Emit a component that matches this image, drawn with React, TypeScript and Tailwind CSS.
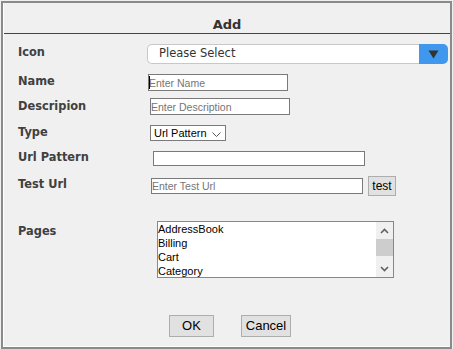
import React from 'react';

const label = 'w-[129px] shrink-0 text-[11.4px] font-bold text-[#404040] [font-family:"DejaVu_Sans",Verdana,sans-serif]';
const field =
  'block border border-[#7a7a7a] bg-white px-0 text-[10.5px] text-black outline-none placeholder:text-[#757575] [font-family:"Liberation_Sans",Arial,sans-serif]';
const btn =
  'flex items-center justify-center border border-[#adadad] bg-[#e1e1e1] text-black [font-family:"Liberation_Sans",Arial,sans-serif]';

const pages = ['AddressBook', 'Billing', 'Cart', 'Category'];

const Chevron: React.FC<{ up?: boolean }> = ({ up }) => (
  <svg width="9" height="6" viewBox="0 0 9 6">
    <polyline
      points={up ? '1,5 4.5,1.5 8,5' : '1,1 4.5,4.5 8,1'}
      fill="none"
      stroke="#606060"
      strokeWidth="1.6"
    />
  </svg>
);

const App: React.FC = () => {
  return (
    <div className="h-[349px] w-[453px] bg-[#f0f0f0] p-px">
      <div className="h-[348px] w-[451px] border-2 border-[#8a8a8a] bg-[#f0f0f0]">
        <div className="flex h-full flex-col border-b border-l border-white">
          {/* Header */}
          <div className="flex h-[31px] items-end justify-center border-b border-[#444]">
            <span className='text-[13px] font-bold leading-[16px] text-[#333] [font-family:"DejaVu_Sans",Verdana,sans-serif]'>
              Add
            </span>
          </div>

          <div className="flex flex-col pl-[14px]">
            {/* Icon */}
            <div className="mt-[10px] flex h-[20px] items-center">
              <span className={`${label} -mt-[2px]`}>Icon</span>
              <div className="flex h-[20px]">
                <div className='flex w-[272px] items-center rounded-l-[5px] border border-r-0 border-[#c8c8c8] bg-white pl-[11px] text-[11.5px] text-[#333] [font-family:"DejaVu_Sans",Verdana,sans-serif]'>
                  Please Select
                </div>
                <div className="flex w-[29px] items-center justify-center rounded-r-[5px] bg-[#3f97ee]">
                  <svg width="11" height="9" viewBox="0 0 11 9">
                    <polygon points="0.5,0.5 10.5,0.5 5.5,8.5" fill="#333" />
                  </svg>
                </div>
              </div>
            </div>

            {/* Name */}
            <div className="mt-[10px] flex h-[17px] items-center">
              <span className={`${label} -mt-[1px]`}>Name</span>
              <div className="relative ml-px flex">
                <input className={`${field} h-[17px] w-[140px]`} placeholder="Enter Name" />
                <span className="absolute left-[1px] top-[2px] h-[13px] w-px bg-black" />
              </div>
            </div>

            {/* Description */}
            <div className="mt-[7px] flex h-[17px] items-center">
              <span className={`${label} mt-px`}>Descripion</span>
              <input className={`${field} ml-[3px] h-[17px] w-[140px]`} placeholder="Enter Description" />
            </div>

            {/* Type */}
            <div className="mt-[10px] flex h-[16px] items-center">
              <span className={`${label} -mt-[1px]`}>Type</span>
              <div className='ml-[3px] flex h-[16px] w-[76px] items-center justify-between border border-[#7a7a7a] bg-white pl-[3px] pr-[4px] text-[11px] text-black [font-family:"Liberation_Sans",Arial,sans-serif]'>
                <span>Url Pattern</span>
                <svg width="9" height="5" viewBox="0 0 9 5" className="mt-[3px]">
                  <polyline points="0.5,0.5 4.5,4.5 8.5,0.5" fill="none" stroke="#555" strokeWidth="1" />
                </svg>
              </div>
            </div>

            {/* Url Pattern */}
            <div className="mt-[10px] flex h-[15px] items-center">
              <span className={`${label} -mt-[1px]`}>Url Pattern</span>
              <input className={`${field} ml-[6px] h-[15px] w-[212px]`} />
            </div>

            {/* Test Url */}
            <div className="mt-[10px] flex h-[20px] items-center">
              <span className={`${label} -mt-[2px]`}>Test Url</span>
              <input className={`${field} ml-[4px] h-[16px] w-[212px]`} placeholder="Enter Test Url" />
              <button className={`${btn} ml-[5px] h-[20px] w-[28px] text-[12px]`}>test</button>
            </div>

            {/* Pages */}
            <div className="mt-[25px] flex h-[57px] items-start">
              <span className={`${label} mt-[2px]`}>Pages</span>
              <div className="ml-[10px] flex h-[57px] w-[237px] border border-[#828790] bg-white">
                <div className='flex-1 text-[11px] leading-[14px] text-black [font-family:"Liberation_Sans",Arial,sans-serif]'>
                  {pages.map((p) => (
                    <div key={p}>{p}</div>
                  ))}
                </div>
                <div className="flex w-[17px] flex-col bg-[#f0f0f0]">
                  <div className="flex h-[17px] items-center justify-center">
                    <Chevron up />
                  </div>
                  <div className="h-[17px] bg-[#cdcdcd]" />
                  <div className="flex-1" />
                  <div className="flex h-[17px] items-center justify-center">
                    <Chevron />
                  </div>
                </div>
              </div>
            </div>

            {/* Buttons */}
            <div className="mt-[37px] flex h-[22px] gap-[27px] pl-[151px]">
              <button className={`${btn} h-[22px] w-[45px] text-[13px]`}>OK</button>
              <button className={`${btn} h-[22px] w-[50px] text-[13px]`}>Cancel</button>
            </div>
          </div>
        </div>
      </div>
    </div>
  );
};

export default App;
